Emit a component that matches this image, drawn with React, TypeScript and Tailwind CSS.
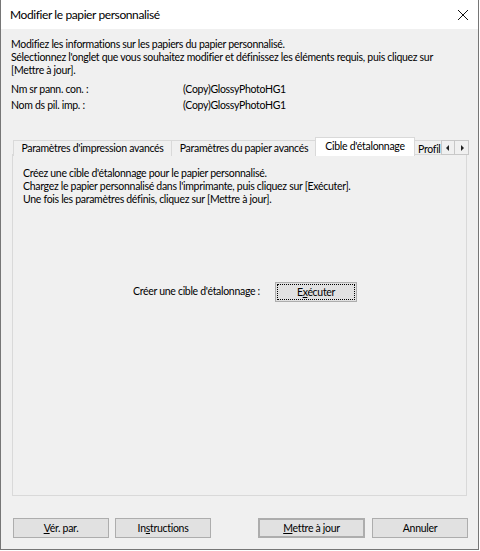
import React from 'react';

// police proche de Segoe UI, resserrée pour retrouver la largeur d'origine
const ui = "font-['Lato',sans-serif] text-[10.5px] tracking-[-0.3px]";

function WinButton({
  children,
  className = '',
}: {
  children: React.ReactNode;
  className?: string;
}) {
  return (
    <button
      className={`h-[20px] bg-[#e1e1e1] border border-[#adadad] text-black leading-none flex items-center justify-center ${ui} ${className}`}
    >
      {children}
    </button>
  );
}

function Tab({
  label,
  width,
  selected = false,
}: {
  label: string;
  width: string;
  selected?: boolean;
}) {
  if (selected) {
    return (
      <div
        className={`${width} h-[19px] -mx-[2px] z-10 bg-white border border-b-0 border-[#d9d9d9] flex items-center justify-center whitespace-nowrap`}
      >
        {label}
      </div>
    );
  }
  return (
    <div
      className={`${width} h-[16px] mt-[3px] bg-[#f0f0f0] border border-b-0 border-[#d9d9d9] -ml-px first:ml-0 flex items-center justify-center whitespace-nowrap overflow-hidden`}
    >
      {label}
    </div>
  );
}

export default function App() {
  return (
    <div className="w-[480px] h-[551px] bg-white text-black">
      <div className={`w-[479px] h-[550px] border-l border-r border-b border-[#767676] bg-[#f0f0f0] flex flex-col ${ui}`}>
        {/* barre de titre */}
        <div className="h-[29px] bg-white flex items-center justify-between pl-[9px] pr-[8px]">
          <span className="text-[12px] tracking-[-0.4px]">Modifier le papier personnalisé</span>
          <svg width="12" height="12" viewBox="0 0 12 12" className="mr-[1px]">
            <path d="M1 1 L11 11 M11 1 L1 11" stroke="#111" strokeWidth="1" fill="none" />
          </svg>
        </div>

        {/* description */}
        <div className="px-[10px] pt-[9px] leading-[13px]">
          <p>Modifiez les informations sur les papiers du papier personnalisé.</p>
          <p>
            Sélectionnez l'onglet que vous souhaitez modifier et définissez les éléments requis, puis cliquez sur
          </p>
          <p>[Mettre à jour].</p>
        </div>

        <div className="px-[10px] pt-[4px] leading-[16px]">
          <div className="flex">
            <span className="w-[172px]">Nm sr pann. con. :</span>
            <span>(Copy)GlossyPhotoHG1</span>
          </div>
          <div className="flex">
            <span className="w-[172px]">Nom ds pil. imp. :</span>
            <span>(Copy)GlossyPhotoHG1</span>
          </div>
        </div>

        {/* onglets */}
        <div className="pl-[11px] mt-[24px]">
          <div className="flex items-start h-[18px] relative">
            <div className="flex items-start pl-px">
              <Tab label="Paramètres d'impression avancés" width="w-[159px]" />
              <Tab label="Paramètres du papier avancés" width="w-[146px]" />
              <Tab label="Cible d'étalonnage" width="w-[100px]" selected />
              <div className="w-[28px] h-[16px] mt-[3px] border-l border-t border-[#d9d9d9] pl-[4px] pt-[1px] leading-[14px] overflow-hidden whitespace-nowrap">
                Profil
              </div>
            </div>
            <div className="flex mt-[3px]">
              <div className="w-[14px] h-[15px] bg-[#f0f0f0] border border-[#c8c8c8] flex items-center justify-center">
                <svg width="4" height="6" viewBox="0 0 4 6">
                  <path d="M3 0 L0 3 L3 6 Z" fill="#222" />
                </svg>
              </div>
              <div className="w-[14px] h-[15px] bg-[#f0f0f0] border border-l-0 border-[#c8c8c8] flex items-center justify-center">
                <svg width="4" height="6" viewBox="0 0 4 6">
                  <path d="M1 0 L4 3 L1 6 Z" fill="#222" />
                </svg>
              </div>
            </div>
          </div>

          <div className="w-[455px] h-[342px] border border-[#d9d9d9] bg-[#f0f0f0] -mt-px flex flex-col">
            <div className="pl-[10px] pt-[12px] leading-[13px]">
              <p>Créez une cible d'étalonnage pour le papier personnalisé.</p>
              <p>Chargez le papier personnalisé dans l'imprimante, puis cliquez sur [Exécuter].</p>
              <p>Une fois les paramètres définis, cliquez sur [Mettre à jour].</p>
            </div>
            <div className="flex items-center pl-[120px] mt-[76px]">
              <span className="w-[142px] whitespace-nowrap">Créer une cible d'étalonnage :</span>
              <button className="w-[82px] h-[20px] bg-[#e1e1e1] border border-[#adadad] leading-none flex items-center justify-center outline-1 outline-dotted outline-black outline-offset-[-3px]">
                <span>
                  E<span className="underline">x</span>écuter
                </span>
              </button>
            </div>
          </div>
        </div>

        {/* boutons */}
        <div className="flex items-center pl-[12px] mt-[22px]">
          <WinButton className="w-[96px]">
            <span>
              <span className="underline">V</span>ér. par.
            </span>
          </WinButton>
          <WinButton className="w-[96px] ml-[6px]">
            <span>
              In<span className="underline">s</span>tructions
            </span>
          </WinButton>
          <WinButton className="w-[107px] ml-[47px] border-2 border-[#0078d7]">
            <span>
              <span className="underline">M</span>ettre à jour
            </span>
          </WinButton>
          <WinButton className="w-[96px] ml-[7px]">Annuler</WinButton>
        </div>
      </div>
    </div>
  );
}
